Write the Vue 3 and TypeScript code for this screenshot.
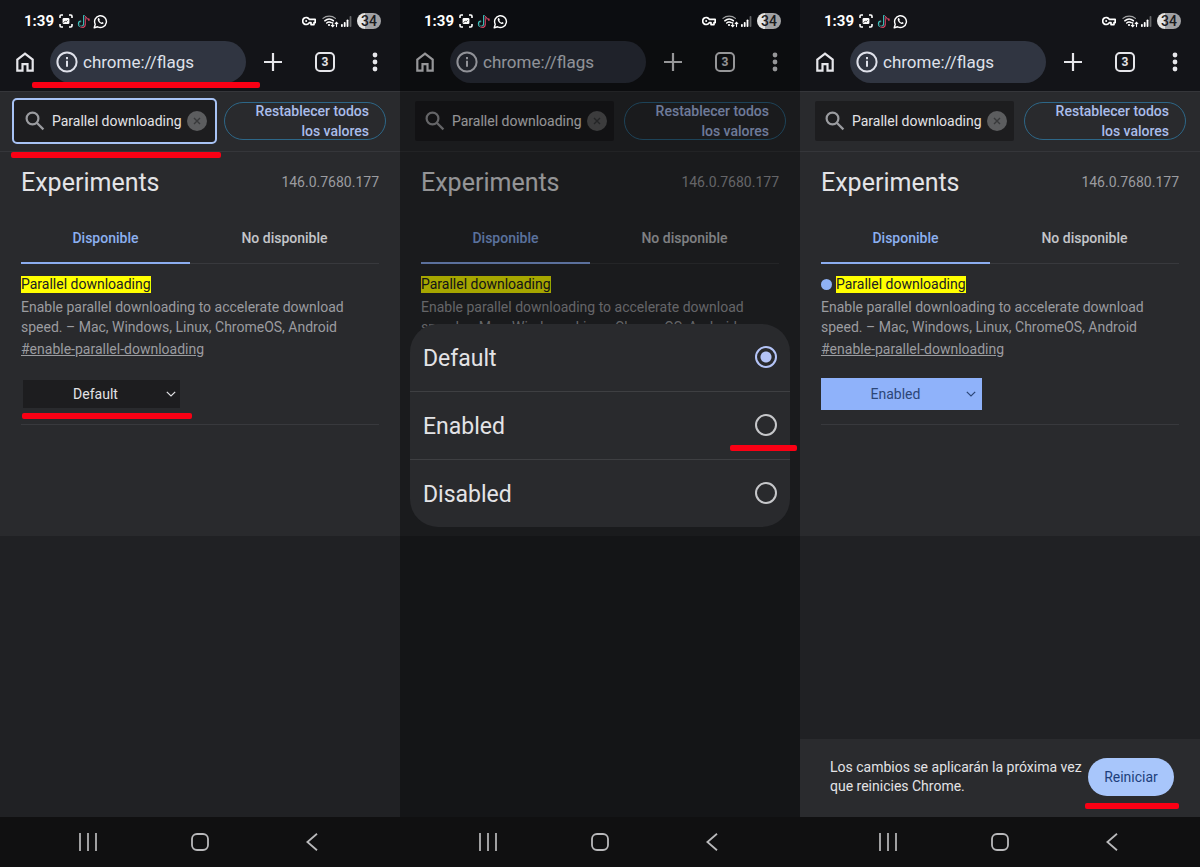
<script setup lang="ts">
import { ref } from 'vue'

type Choice = 'Default' | 'Enabled' | 'Disabled'
type Mark = 'address' | 'search' | 'select' | 'option' | 'restart'

interface Screen {
  id: string
  value: Choice
  searchFocused: boolean
  pickerOpen: boolean
  restartBar: boolean
  marks: Mark[]
}

const choices: Choice[] = ['Default', 'Enabled', 'Disabled']

const screens = ref<Screen[]>([
  { id: 'find', value: 'Default', searchFocused: true, pickerOpen: false, restartBar: false, marks: ['address', 'search', 'select'] },
  { id: 'pick', value: 'Default', searchFocused: false, pickerOpen: true, restartBar: false, marks: ['option'] },
  { id: 'apply', value: 'Enabled', searchFocused: false, pickerOpen: false, restartBar: true, marks: ['restart'] },
])

const query = ref('Parallel downloading')
</script>

<template>
  <main class="board">
    <section v-for="s in screens" :key="s.id" class="phone" :class="{ dimmed: s.pickerOpen }">
      <div class="status">
        <span class="clock">1:39</span>
        <svg class="i-shot" viewBox="0 0 14 14" fill="none" stroke="#fff" stroke-width="1.6">
          <path d="M1 4V2.2Q1 1 2.2 1H4M10 1h1.8Q13 1 13 2.2V4M13 10v1.8q0 1.2-1.2 1.2H10M4 13H2.2Q1 13 1 11.8V10" />
          <rect x="3.6" y="4" width="6.8" height="6" rx="1.2" fill="#fff" stroke="none" />
          <path d="M4.6 8.8 6.2 7l1 .9L8.6 6.2" stroke="#222" stroke-width=".8" />
        </svg>
        <svg class="i-note" viewBox="0 0 14 16" fill="none" stroke-width="1.6">
          <path d="M7.3 1.2v9.3a2.8 2.8 0 1 1-2.8-2.8M7.3 1.2c.3 2.2 1.8 3.6 4 3.7" stroke="#3fc9c0" />
          <path d="M8.7 2.2v9.3a2.8 2.8 0 0 1-5 1.7M9 3c.6 1.6 2 2.6 3.8 2.7v1.6" stroke="#e0405f" />
          <path d="M8 1.8v9.2a2.8 2.8 0 1 1-2.8-2.8M8 2.2c.4 2 1.8 3.2 3.8 3.4" stroke="#25303a" stroke-width="1" />
        </svg>
        <svg class="i-chat" viewBox="0 0 16 16" fill="none" stroke="#fff" stroke-width="1.5">
          <path d="M1.3 14.7 2.4 11a6.3 6.3 0 1 1 2.5 2.6z" stroke-linejoin="round" />
          <path d="M5.5 4.6c-.9.8-.7 2.4.8 4.1 1.7 1.8 3.8 2.6 4.8 1.5.6-.7.2-1-.9-1.5-.8-.3-.9.6-1.4.5-.8-.3-1.6-1.1-2-1.9-.1-.4.7-.6.4-1.4-.4-1-.8-2-1.7-1.3z" fill="#fff" stroke="none" />
        </svg>
        <span class="spacer"></span>
        <svg class="i-key" viewBox="0 0 14 10" fill="none" stroke="#fff" stroke-width="1.7">
          <path d="M7.3 3.4a3.5 3.5 0 1 0 0 3.2H9v2h3v-2h1.2V3.4z" stroke-linejoin="round" />
          <circle cx="4.2" cy="5" r="1" fill="#fff" stroke="none" />
        </svg>
        <svg class="i-wifi" viewBox="0 0 17 14" fill="none" stroke="#fff" stroke-linecap="round">
          <path d="M1 4.4a9.4 9.4 0 0 1 12.4 0" stroke-width="1.2" opacity=".6" />
          <path d="M2.8 6.8a6.8 6.8 0 0 1 8.6-.1" stroke-width="1.5" />
          <path d="M4.7 9a4 4 0 0 1 4.6-.3" stroke-width="1.5" />
          <circle cx="7" cy="11" r="1.1" fill="#fff" stroke="none" />
          <path d="M10.7 8.4v4.2M9.4 11.4l1.3 1.3 1.3-1.3M14.5 12.6V8.4M13.2 9.6l1.3-1.3 1.3 1.3" stroke-width="1.1" />
        </svg>
        <svg class="i-signal" viewBox="0 0 11 11" fill="#fff">
          <rect x="0" y="8" width="1.8" height="3" rx=".8" />
          <rect x="2.8" y="6" width="1.8" height="5" rx=".8" />
          <rect x="5.6" y="3.4" width="1.8" height="7.6" rx=".8" />
          <rect x="8.6" y="0" width="1.8" height="11" rx=".8" opacity=".35" />
        </svg>
        <span class="battery">34</span>
      </div>

      <header class="toolbar">
        <button class="icon-btn home" aria-label="Inicio">
          <svg viewBox="0 0 18 20" fill="none" stroke="currentColor" stroke-width="2.2">
            <path d="M1.3 7.6 9 1.6l7.7 6v11h-5.2v-6.4h-5v6.4H1.3z" />
          </svg>
        </button>
        <div class="address">
          <svg viewBox="0 0 22 22" fill="none" stroke="currentColor" stroke-width="2">
            <circle cx="11" cy="11" r="9.6" />
            <path d="M11 9.8v6M11 6v2.2" />
          </svg>
          <input :id="`url-${s.id}`" type="text" value="chrome://flags" aria-label="Dirección" />
          <i v-if="s.marks.includes('address')" class="mark mark-address"></i>
        </div>
        <button class="icon-btn plus" aria-label="Nueva pestaña">
          <svg viewBox="0 0 18 18" fill="none" stroke="currentColor" stroke-width="2.2"><path d="M9 0v18M0 9h18" /></svg>
        </button>
        <button class="tab-count" aria-label="Pestañas">3</button>
        <button class="icon-btn more" aria-label="Más">
          <svg viewBox="0 0 6 20" fill="currentColor">
            <circle cx="3" cy="3" r="2.4" /><circle cx="3" cy="10" r="2.4" /><circle cx="3" cy="17" r="2.4" />
          </svg>
        </button>
      </header>

      <div class="page">
        <div class="search-row">
          <div class="search" :class="{ focused: s.searchFocused }">
            <svg class="lens" viewBox="0 0 20 20" fill="none" stroke="currentColor" stroke-width="2.2">
              <circle cx="7.5" cy="7.5" r="5.9" /><path d="m12 12 6.4 6.4" />
            </svg>
            <input :id="`q-${s.id}`" v-model="query" type="text" aria-label="Buscar flags" />
            <button class="clear" aria-label="Borrar">
              <svg viewBox="0 0 20 20" stroke="currentColor" stroke-width="1.4"><path d="m7 7 6 6M13 7l-6 6" /></svg>
            </button>
            <i v-if="s.marks.includes('search')" class="mark mark-search"></i>
          </div>
          <button class="reset">Restablecer todos los valores</button>
        </div>

        <div class="content">
          <div class="heading">
            <h1>Experiments</h1>
            <span>146.0.7680.177</span>
          </div>
          <div class="tabs" role="tablist">
            <button class="tab active" role="tab" aria-selected="true">Disponible</button>
            <button class="tab" role="tab" aria-selected="false">No disponible</button>
          </div>
          <article class="flag">
            <h2 :class="{ changed: s.value !== 'Default' }"><mark>Parallel downloading</mark></h2>
            <p>Enable parallel downloading to accelerate download speed. – Mac, Windows, Linux, ChromeOS, Android</p>
            <a href="#enable-parallel-downloading">#enable-parallel-downloading</a>
            <div class="select-wrap" :class="{ on: s.value !== 'Default' }">
              <select :id="`flag-${s.id}`" v-model="s.value" aria-label="Parallel downloading">
                <option v-for="c in choices" :key="c">{{ c }}</option>
              </select>
              <svg viewBox="0 0 10 6" fill="none" stroke="currentColor" stroke-width="1.2"><path d="m.8.8 4.2 4.2L9.2.8" /></svg>
              <i v-if="s.marks.includes('select')" class="mark mark-select"></i>
            </div>
          </article>
        </div>
      </div>

      <div class="rest"></div>

      <footer v-if="s.restartBar" class="restart-bar">
        <p>Los cambios se aplicarán la próxima vez que reinicies Chrome.</p>
        <div class="restart-wrap">
          <button>Reiniciar</button>
          <i v-if="s.marks.includes('restart')" class="mark mark-restart"></i>
        </div>
      </footer>

      <nav class="system">
        <button aria-label="Recientes">
          <svg viewBox="0 0 18 18" fill="none" stroke="currentColor" stroke-width="1.7"><path d="M1 0v18M9 0v18M17 0v18" /></svg>
        </button>
        <button aria-label="Inicio">
          <svg viewBox="0 0 18 18" fill="none" stroke="currentColor" stroke-width="1.8"><rect x="1" y="1" width="16" height="16" rx="5" /></svg>
        </button>
        <button aria-label="Atrás">
          <svg viewBox="0 0 18 18" fill="none" stroke="currentColor" stroke-width="1.8"><path d="M14 .8 4.4 9l9.6 8.2" /></svg>
        </button>
      </nav>

      <template v-if="s.pickerOpen">
        <div class="scrim"></div>
        <div class="picker" role="dialog" aria-label="Parallel downloading">
          <label v-for="c in choices" :key="c" :for="`${s.id}-${c}`">
            <span>{{ c }}</span>
            <input :id="`${s.id}-${c}`" v-model="s.value" type="radio" :name="`choice-${s.id}`" :value="c" />
            <i v-if="c === 'Enabled' && s.marks.includes('option')" class="mark mark-option"></i>
          </label>
        </div>
      </template>
    </section>
  </main>
</template>

<style>
body {
  margin: 0;
  background: #202124;
}
</style>

<style scoped>
* {
  box-sizing: border-box;
}
.board {
  display: grid;
  grid-template-columns: repeat(3, minmax(0, 1fr));
  min-height: 100vh;
  font-family: Roboto, "Liberation Sans", sans-serif;
  font-size: 14px;
  color: #e3e3e6;
}
button,
input,
select {
  font: inherit;
  color: inherit;
  margin: 0;
  padding: 0;
  border: 0;
  background: none;
  outline: 0;
}
svg {
  display: block;
  flex: none;
}
.phone {
  position: relative;
  display: flex;
  flex-direction: column;
  background: #131418;
}

/* Status bar */
.status {
  display: flex;
  align-items: center;
  height: 40px;
  padding: 2px 19px 0 24px;
  color: #fff;
}
.dimmed .status {
  background: #0c0d11;
}
.clock {
  font-size: 15px;
  font-weight: 700;
  margin-right: 5px;
}
.spacer {
  flex: 1;
}
.i-shot { width: 14px; height: 14px; margin-right: 4px; }
.i-note { width: 13px; height: 15px; margin-right: 3px; }
.i-chat { width: 15px; height: 15px; }
.i-key { width: 14px; height: 10px; margin-right: 6px; }
.i-wifi { width: 17px; height: 14px; margin-right: 2px; }
.i-signal { width: 11px; height: 11px; margin-right: 5px; }
.battery {
  width: 24px;
  height: 16px;
  border-radius: 8px;
  background: linear-gradient(90deg, #e4e4e4 34%, #a2a2a4 34%);
  color: #1b1b1d;
  font-size: 14px;
  font-weight: 500;
  line-height: 16px;
  text-align: center;
}

/* Browser toolbar */
.toolbar {
  display: flex;
  align-items: center;
  height: 52px;
  padding: 0 22px 7px 16px;
  border-bottom: 1px solid #35363a;
}
.icon-btn {
  display: grid;
  place-items: center;
  flex: none;
  color: #e6e6ea;
}
.home svg { width: 18px; height: 20px; }
.plus svg { width: 18px; height: 18px; }
.more svg { width: 6px; height: 20px; }
.address {
  position: relative;
  display: flex;
  align-items: center;
  flex: 1;
  gap: 5px;
  min-width: 0;
  height: 42px;
  margin: 0 18px 0 16px;
  padding: 0 6px;
  border-radius: 21px;
  background: #303541;
  color: #dfe1ea;
}
.address svg {
  width: 22px;
  height: 22px;
}
.address input {
  flex: 1;
  min-width: 0;
  font-size: 17px;
}
.tab-count {
  flex: none;
  width: 20px;
  height: 20px;
  margin: 0 37px 0 33px;
  border: 2px solid #e6e6ea;
  border-radius: 5px;
  font-size: 12px;
  font-weight: 700;
  line-height: 16px;
}

/* Flags page */
.page {
  min-height: 444px;
  background: #292a2d;
}
.search-row {
  display: flex;
  align-items: center;
  gap: 7px;
  height: 60px;
  padding: 0 14px 2px 12px;
  border-bottom: 1px solid #35363a;
}
.search {
  position: relative;
  display: flex;
  align-items: center;
  flex: 1;
  min-width: 0;
  height: 46px;
  padding: 0 7px 0 10px;
  border: 3px solid transparent;
  border-radius: 5px;
  background: #1d1d1f padding-box;
}
.search.focused {
  border: 2px solid #a8c3f5;
  padding: 0 8px 0 11px;
}
.lens {
  width: 20px;
  height: 20px;
  margin-right: 7px;
  color: #9b9ca0;
}
.search input {
  flex: 1;
  min-width: 0;
}
.clear {
  width: 20px;
  height: 20px;
  border-radius: 50%;
  background: #5c5d5f;
  color: #38393b;
}
.reset {
  display: flex;
  align-items: center;
  justify-content: flex-end;
  width: 162px;
  height: 38px;
  padding: 0 16px 0 24px;
  border: 1px solid #2d6788;
  border-radius: 19px;
  color: #a9bdea;
  font-weight: 500;
  line-height: 20px;
  text-align: right;
}
.content {
  padding: 0 21px;
}
.heading {
  display: flex;
  align-items: center;
  justify-content: space-between;
  height: 60px;
}
h1 {
  margin: 0;
  font-size: 25px;
  font-weight: 400;
}
.heading span {
  color: #9b9ca0;
}
.tabs {
  display: flex;
  border-bottom: 1px solid #38393d;
}
.tab {
  flex: 1 1 auto;
  height: 52px;
  margin-bottom: -1px;
  padding-top: 2px;
  border-bottom: 2px solid transparent;
  font-weight: 500;
  color: #c4c5c9;
}
.tab.active {
  color: #8cb0f0;
  border-bottom-color: #8cadf0;
}
.flag {
  padding: 12px 0 14px;
  border-bottom: 1px solid #38393d;
  color: #9b9ca0;
}
h2 {
  display: flex;
  align-items: center;
  gap: 4px;
  margin: 0;
  font-size: 14px;
  font-weight: 400;
  line-height: 17px;
}
h2.changed::before {
  content: "";
  width: 11px;
  height: 11px;
  border-radius: 50%;
  background: #8fb2f5;
}
mark {
  background: #ff0;
  color: #202124;
}
.flag p {
  margin: 4px 0 0;
  line-height: 20px;
}
.flag a {
  display: block;
  margin-top: 2px;
  line-height: 20px;
  color: inherit;
}
.dimmed .flag a,
.dimmed .select-wrap {
  visibility: hidden;
}
.select-wrap {
  position: relative;
  display: grid;
  align-items: center;
  width: 161px;
  height: 32px;
  margin-top: 19px;
  color: #e3e3e6;
}
.select-wrap select,
.select-wrap > svg {
  grid-area: 1 / 1;
}
.select-wrap select {
  appearance: none;
  width: 100%;
  height: 32px;
  padding-right: 12px;
  border: 2px solid #292a2d;
  background: #1d1d1f;
  text-align-last: center;
}
.select-wrap > svg {
  width: 10px;
  height: 6px;
  justify-self: end;
  margin-right: 6px;
  pointer-events: none;
}
.select-wrap.on {
  color: #2c4677;
}
.select-wrap.on select {
  border-color: #8fb2fa;
  background: #8fb2fa;
}
.rest {
  flex: 1;
  background: #202124;
}
.restart-bar {
  display: flex;
  align-items: center;
  justify-content: space-between;
  gap: 4px;
  min-height: 78px;
  padding: 0 26px 2px 30px;
  background: #2a2b2e;
}
.restart-bar p {
  flex: 1;
  margin: 0;
  line-height: 19px;
}
.restart-wrap {
  position: relative;
}
.restart-bar button {
  display: block;
  width: 86px;
  height: 38px;
  border-radius: 19px;
  background: #a8c6fb;
  color: #1d3f7c;
}

/* System navigation */
.system {
  display: flex;
  align-items: center;
  justify-content: center;
  gap: 94px;
  height: 50px;
  background: #101011;
  color: #b9b9bb;
}
.system svg {
  width: 18px;
  height: 18px;
}

/* Option picker */
.scrim {
  position: absolute;
  inset: 40px 0 50px;
  background: rgba(0, 0, 0, 0.35);
}
.picker {
  position: absolute;
  top: 324px;
  left: 10px;
  right: 10px;
  border-radius: 28px;
  background: #292a2d;
}
.picker label {
  position: relative;
  display: flex;
  align-items: center;
  justify-content: space-between;
  height: 67px;
  padding: 0 13px 2px;
  font-size: 23px;
}
.picker label + label {
  height: 68px;
  border-top: 1px solid #3e3f42;
}
.picker span {
  padding-top: 4px;
}
.picker input {
  appearance: none;
  width: 22px;
  height: 22px;
  border: 2px solid #c6c7ca;
  border-radius: 50%;
}
.picker input:checked {
  border-color: #b4c4f7;
  background: radial-gradient(circle, #b4c4f7 5px, transparent 6px);
}

/* Red guide strokes */
.mark {
  position: absolute;
  height: 6px;
  border-radius: 2px;
  background: #fa0014;
}
.mark-address { left: -18px; right: -14px; top: 41px; }
.mark-search { left: -3px; right: -6px; top: 52px; }
.mark-select { left: 1px; right: -10px; top: 35px; }
.mark-option { right: -7px; width: 67px; bottom: 8px; }
.mark-restart { left: -3px; right: -5px; top: 45px; }
</style>
